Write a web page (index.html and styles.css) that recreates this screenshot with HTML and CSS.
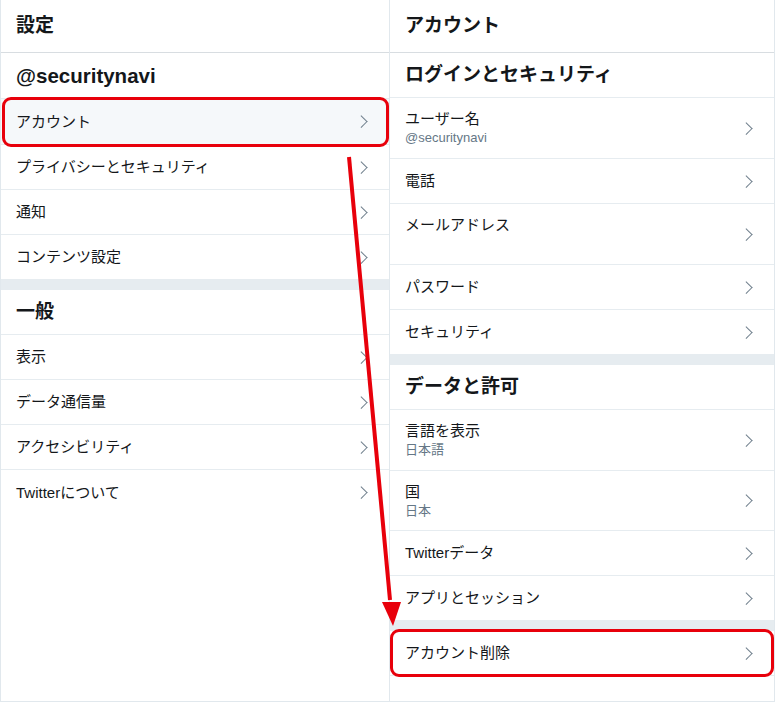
FILE: index.html
```html
<!DOCTYPE html>
<html lang="ja">
<head>
<meta charset="utf-8">
<link rel="stylesheet" href="styles.css">
</head>
<body>
<div class="page">
  <div class="col col-left">
    <div class="top-head">設定</div>
    <div class="sec-head handle">@securitynavi</div>
    <div class="row active mark">アカウント<span class="chev"></span></div>
    <div class="row">プライバシーとセキュリティ<span class="chev"></span></div>
    <div class="row">通知<span class="chev"></span></div>
    <div class="row">コンテンツ設定<span class="chev"></span></div>
    <div class="gap"></div>
    <div class="sec-head">一般</div>
    <div class="row">表示<span class="chev"></span></div>
    <div class="row">データ通信量<span class="chev"></span></div>
    <div class="row">アクセシビリティ<span class="chev"></span></div>
    <div class="row last">Twitterについて<span class="chev"></span></div>
  </div>
  <div class="col col-right">
    <div class="top-head">アカウント</div>
    <div class="sec-head">ログインとセキュリティ</div>
    <div class="row two"><div class="txt"><div class="ttl">ユーザー名</div><div class="sub">@securitynavi</div></div><span class="chev"></span></div>
    <div class="row">電話<span class="chev"></span></div>
    <div class="row two"><div class="txt"><div class="ttl">メールアドレス</div><div class="sub">&nbsp;</div></div><span class="chev"></span></div>
    <div class="row">パスワード<span class="chev"></span></div>
    <div class="row">セキュリティ<span class="chev"></span></div>
    <div class="gap"></div>
    <div class="sec-head">データと許可</div>
    <div class="row two"><div class="txt"><div class="ttl">言語を表示</div><div class="sub">日本語</div></div><span class="chev"></span></div>
    <div class="row two"><div class="txt"><div class="ttl">国</div><div class="sub">日本</div></div><span class="chev"></span></div>
    <div class="row">Twitterデータ<span class="chev"></span></div>
    <div class="row">アプリとセッション<span class="chev"></span></div>
    <div class="gap"></div>
    <div class="row mark">アカウント削除<span class="chev"></span></div>
  </div>
  <svg class="arrow" width="775" height="702" viewBox="0 0 775 702">
    <line x1="349" y1="157" x2="390" y2="600" stroke="#e8000b" stroke-width="4"/>
    <polygon points="382,602 401,602 393,626" fill="#e8000b"/>
  </svg>
</div>
</body>
</html>
```
FILE: styles.css
```css
* { box-sizing: border-box; }
html, body { margin: 0; padding: 0; background: #fff; }
body {
  font-family: "Liberation Sans", "Noto Sans CJK JP", sans-serif;
  color: #14171a;
}
.page {
  position: relative;
  display: flex;
  width: 775px;
  height: 702px;
  border-bottom: 1px solid #e1e8ed;
  overflow: hidden;
}
.col {
  display: flex;
  flex-direction: column;
}
.col-left {
  width: 390px;
  border-left: 1px solid #e1e8ed;
  border-right: 1px solid #e1e8ed;
}
.col-right {
  width: 385px;
  border-right: 1px solid #e1e8ed;
}
.top-head {
  height: 53px;
  padding: 0 15px;
  display: flex;
  align-items: center;
  font-size: 19px;
  font-weight: bold;
  line-height: 24px;
  border-bottom: 1px solid #d8dde1;
}
.sec-head {
  height: 45px;
  padding: 0 15px;
  display: flex;
  align-items: center;
  font-size: 19px;
  font-weight: bold;
  line-height: 24px;
  border-bottom: 1px solid #e6ecf0;
}
.handle { font-size: 20.5px; height: 46px; }
.row {
  position: relative;
  height: 45px;
  padding: 0 15px;
  display: flex;
  align-items: center;
  justify-content: space-between;
  font-size: 15px;
  line-height: 20px;
  border-bottom: 1px solid #e6ecf0;
}
.row.active { height: 46px; }
.row.last { border-bottom: none; }
.row.two { height: 61px; }
.row.two + .row.two { height: 60px; }
.ttl { font-size: 15px; line-height: 20px; }
.sub { font-size: 13px; line-height: 18px; color: #657786; }
.active { background: #f5f8fa; }
.gap {
  height: 10px;
  background: #e6ecf0;
  flex: none;
}
.chev {
  width: 8px;
  height: 13px;
  margin-right: 6px;
  flex: none;
  position: relative;
}
.chev::before {
  content: "";
  position: absolute;
  left: -3px;
  top: 2px;
  width: 7.5px;
  height: 7.5px;
  border-top: 1.6px solid #6f7f8c;
  border-right: 1.6px solid #6f7f8c;
  transform: rotate(45deg);
}
.mark::after {
  content: "";
  position: absolute;
  left: 0;
  right: 0;
  top: -2px;
  bottom: -2px;
  border: 3px solid #e8000b;
  border-radius: 9px;
  pointer-events: none;
}
.col-left .mark::after { left: 1px; right: 0; bottom: -3px; }
.arrow {
  position: absolute;
  left: 0;
  top: 0;
  pointer-events: none;
}
```
